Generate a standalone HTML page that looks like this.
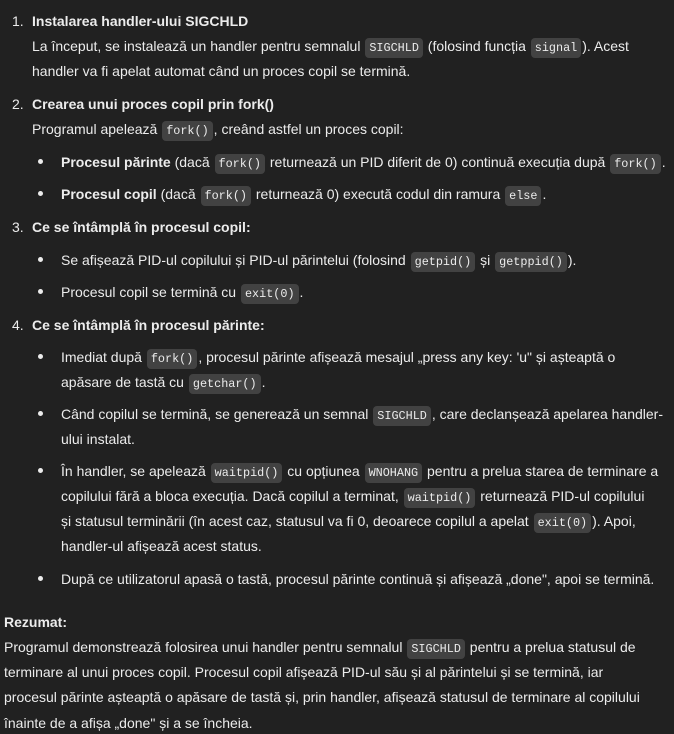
<!DOCTYPE html>
<html><head><meta charset="utf-8"><style>
html,body{margin:0;padding:0;background:#212121;}
body{width:674px;height:728px;overflow:hidden;position:relative;font-family:"Liberation Sans",sans-serif;font-size:14px;color:#ececec;}
.l{position:absolute;height:22px;line-height:22px;white-space:nowrap;}
b{font-weight:bold;}
code{font-family:"Liberation Mono",monospace;font-size:11.8px;background:#424242;border-radius:4px;padding:3px 4px;margin:0 1px;}
.d{position:absolute;width:5px;height:5px;border-radius:50%;background:#ececec;}
</style></head><body>
<div class="l" style="left:12px;top:10px">1.</div>
<div class="l" style="left:32px;top:10px"><b>Instalarea handler-ului SIGCHLD</b></div>
<div class="l" style="left:32px;top:35px">La început, se instalează un handler pentru semnalul <code>SIGCHLD</code> (folosind funcția <code>signal</code>). Acest</div>
<div class="l" style="left:32px;top:60px">handler va fi apelat automat când un proces copil se termină.</div>

<div class="l" style="left:12px;top:93px">2.</div>
<div class="l" style="left:32px;top:93px"><b>Crearea unui proces copil prin fork()</b></div>
<div class="l" style="left:32px;top:118px">Programul apelează <code>fork()</code>, creând astfel un proces copil:</div>
<div class="d" style="left:38px;top:159px"></div>
<div class="l" style="left:61px;top:151px"><b>Procesul părinte</b> (dacă <code>fork()</code> returnează un PID diferit de 0) continuă execuția după <code>fork()</code>.</div>
<div class="d" style="left:38px;top:191px"></div>
<div class="l" style="left:61px;top:183px"><b>Procesul copil</b> (dacă <code>fork()</code> returnează 0) execută codul din ramura <code>else</code>.</div>

<div class="l" style="left:12px;top:216px">3.</div>
<div class="l" style="left:32px;top:216px"><b>Ce se întâmplă în procesul copil:</b></div>
<div class="d" style="left:38px;top:257px"></div>
<div class="l" style="left:61px;top:249px">Se afișează PID-ul copilului și PID-ul părintelui (folosind <code>getpid()</code> și <code>getppid()</code>).</div>
<div class="d" style="left:38px;top:289px"></div>
<div class="l" style="left:61px;top:281px">Procesul copil se termină cu <code>exit(0)</code>.</div>

<div class="l" style="left:12px;top:314px">4.</div>
<div class="l" style="left:32px;top:314px"><b>Ce se întâmplă în procesul părinte:</b></div>
<div class="d" style="left:38px;top:354px"></div>
<div class="l" style="left:61px;top:346px">Imediat după <code>fork()</code>, procesul părinte afișează mesajul „press any key: 'u" și așteaptă o</div>
<div class="l" style="left:61px;top:371px">apăsare de tastă cu <code>getchar()</code>.</div>
<div class="d" style="left:38px;top:411px"></div>
<div class="l" style="left:61px;top:403px">Când copilul se termină, se generează un semnal <code>SIGCHLD</code>, care declanșează apelarea handler-</div>
<div class="l" style="left:61px;top:428px">ului instalat.</div>
<div class="d" style="left:38px;top:468px"></div>
<div class="l" style="left:61px;top:460px">În handler, se apelează <code>waitpid()</code> cu opțiunea <code>WNOHANG</code> pentru a prelua starea de terminare a</div>
<div class="l" style="left:61px;top:485px">copilului fără a bloca execuția. Dacă copilul a terminat, <code>waitpid()</code> returnează PID-ul copilului</div>
<div class="l" style="left:61px;top:510px">și statusul terminării (în acest caz, statusul va fi 0, deoarece copilul a apelat <code>exit(0)</code>). Apoi,</div>
<div class="l" style="left:61px;top:535px">handler-ul afișează acest status.</div>
<div class="d" style="left:38px;top:576px"></div>
<div class="l" style="left:61px;top:568px">După ce utilizatorul apasă o tastă, procesul părinte continuă și afișează „done", apoi se termină.</div>

<div class="l" style="left:4px;top:611px"><b>Rezumat:</b></div>
<div class="l" style="left:4px;top:636px">Programul demonstrează folosirea unui handler pentru semnalul <code>SIGCHLD</code> pentru a prelua statusul de</div>
<div class="l" style="left:4px;top:661px">terminare al unui proces copil. Procesul copil afișează PID-ul său și al părintelui și se termină, iar</div>
<div class="l" style="left:4px;top:686px">procesul părinte așteaptă o apăsare de tastă și, prin handler, afișează statusul de terminare al copilului</div>
<div class="l" style="left:4px;top:712px">înainte de a afișa „done" și a se încheia.</div>
</body></html>
